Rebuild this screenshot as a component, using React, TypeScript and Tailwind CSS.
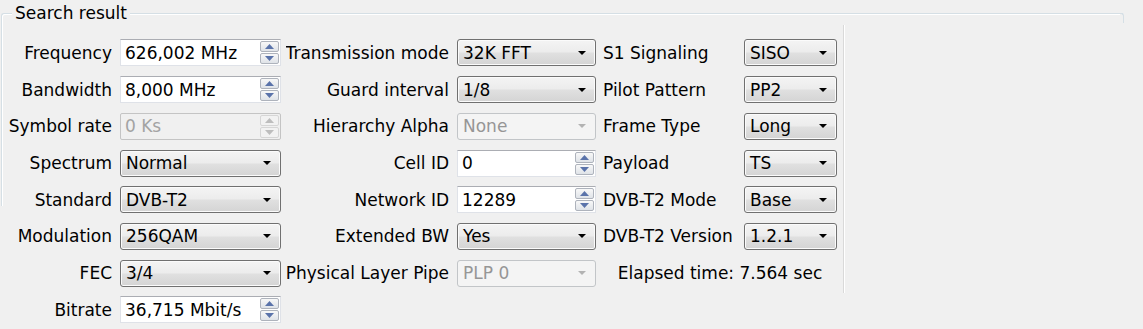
import React from 'react';

function ArrowDown({ color }: { color: string }) {
  return (
    <svg width="8" height="4" viewBox="0 0 8 4">
      <polygon points="0,0 8,0 4,4" fill={color} />
    </svg>
  );
}

function SpinButton({ up, disabled }: { up?: boolean; disabled?: boolean }) {
  return (
    <div
      className={
        disabled
          ? 'flex h-[11px] w-[19px] items-center justify-center rounded-[2px] border border-[#d6d6d6] bg-[#f2f2f2]'
          : 'flex h-[11px] w-[19px] items-center justify-center rounded-[2px] border border-[#aeb3bc] bg-gradient-to-b from-[#f8f8f8] to-[#dfe3e8]'
      }
    >
      <svg width="9" height="5" viewBox="0 0 9 5">
        <polygon
          points={up ? '0,5 9,5 4.5,0' : '0,0 9,0 4.5,5'}
          fill={disabled ? '#bdbdbd' : '#5a73aa'}
        />
      </svg>
    </div>
  );
}

function SpinBox({ value, disabled }: { value: string; disabled?: boolean }) {
  return (
    <div
      className={
        disabled
          ? 'flex h-[27px] items-center rounded-[2px] border border-[#c4c4c4] bg-[#f0f0f0] text-[#a3a3a3]'
          : 'flex h-[27px] items-center border border-[#dfe2e8] border-t-[#abadb3] bg-white'
      }
    >
      <span className="flex-1 whitespace-nowrap pl-[4px]">{value}</span>
      <div className="mr-[1px] flex flex-col gap-[1px]">
        <SpinButton up disabled={disabled} />
        <SpinButton disabled={disabled} />
      </div>
    </div>
  );
}

function Combo({ value, disabled }: { value: string; disabled?: boolean }) {
  return (
    <div
      className={
        disabled
          ? 'flex h-[27px] items-center rounded-[3px] border border-[#c2c5c8] bg-[#f4f4f4] text-[#969696]'
          : 'flex h-[27px] items-center rounded-[3px] border border-[#707070] bg-[linear-gradient(to_bottom,#f4f4f4_0%,#ececec_48%,#e0e0e0_52%,#d4d4d4_100%)] shadow-[inset_0_0_0_1px_#fbfbfb]'
      }
    >
      <span className="flex-1 whitespace-nowrap pl-[5px]">{value}</span>
      <div className="mr-[9px]">
        <ArrowDown color={disabled ? '#b3b3b3' : '#000000'} />
      </div>
    </div>
  );
}

function RightLabel({ text }: { text: string }) {
  return (
    <div className="flex justify-end overflow-hidden whitespace-nowrap">
      <span>{text}</span>
    </div>
  );
}

export default function App() {
  return (
    <div className="h-[329px] w-[1143px] overflow-hidden bg-[#f0f0f0] font-['DejaVu_Sans',sans-serif] text-[17px] leading-[20px] text-black">
      <div className="relative ml-[1px] mt-[13px] h-[193px] w-[1122px] rounded-tl-[3px] border-l border-t border-[#d5dfe5] shadow-[inset_1px_1px_0_#ffffff]">
        <span className="absolute -top-[11px] left-[10px] bg-[#f0f0f0] px-[3px] leading-[20px]">
          Search result
        </span>
        <div className="absolute -right-px -top-px h-[10px] w-[4px] rounded-tr-[3px] border-r border-t border-[#d5dfe5] bg-[#f0f0f0]" />

        <div className="flex pt-[11px]">
          {/* column 1 */}
          <div className="mt-[9.6px] grid grid-cols-[110px_161px] auto-rows-[36.7px] items-center gap-x-2">
            <RightLabel text="Frequency" />
            <SpinBox value="626,002 MHz" />
            <RightLabel text="Bandwidth" />
            <SpinBox value="8,000 MHz" />
            <RightLabel text="Symbol rate" />
            <SpinBox value="0 Ks" disabled />
            <RightLabel text="Spectrum" />
            <Combo value="Normal" />
            <RightLabel text="Standard" />
            <Combo value="DVB-T2" />
            <RightLabel text="Modulation" />
            <Combo value="256QAM" />
            <RightLabel text="FEC" />
            <Combo value="3/4" />
            <RightLabel text="Bitrate" />
            <SpinBox value="36,715 Mbit/s" />
          </div>

          {/* column 2 */}
          <div className="ml-[5px] mt-[9.6px] grid grid-cols-[163px_139px] auto-rows-[36.7px] items-center gap-x-[8px] self-start">
            <RightLabel text="Transmission mode" />
            <Combo value="32K FFT" />
            <RightLabel text="Guard interval" />
            <Combo value="1/8" />
            <RightLabel text="Hierarchy Alpha" />
            <Combo value="None" disabled />
            <RightLabel text="Cell ID" />
            <SpinBox value="0" />
            <RightLabel text="Network ID" />
            <SpinBox value="12289" />
            <RightLabel text="Extended BW" />
            <Combo value="Yes" />
            <RightLabel text="Physical Layer Pipe" />
            <Combo value="PLP 0" disabled />
          </div>

          {/* column 3 */}
          <div className="ml-[7px] mt-[9.6px] grid grid-cols-[134px_93px] auto-rows-[36.7px] items-center gap-x-[7px] self-start">
            <span className="whitespace-nowrap">S1 Signaling</span>
            <Combo value="SISO" />
            <span className="whitespace-nowrap">Pilot Pattern</span>
            <Combo value="PP2" />
            <span className="whitespace-nowrap">Frame Type</span>
            <Combo value="Long" />
            <span className="whitespace-nowrap">Payload</span>
            <Combo value="TS" />
            <span className="whitespace-nowrap">DVB-T2 Mode</span>
            <Combo value="Base" />
            <span className="whitespace-nowrap">DVB-T2 Version</span>
            <Combo value="1.2.1" />
            <span className="col-span-2 whitespace-nowrap text-center">Elapsed time: 7.564 sec</span>
          </div>

          <div className="ml-[6px] h-[268px] self-start border-l border-[#d9d9d9] shadow-[1px_0_0_#ffffff]" />
        </div>
      </div>
    </div>
  );
}
